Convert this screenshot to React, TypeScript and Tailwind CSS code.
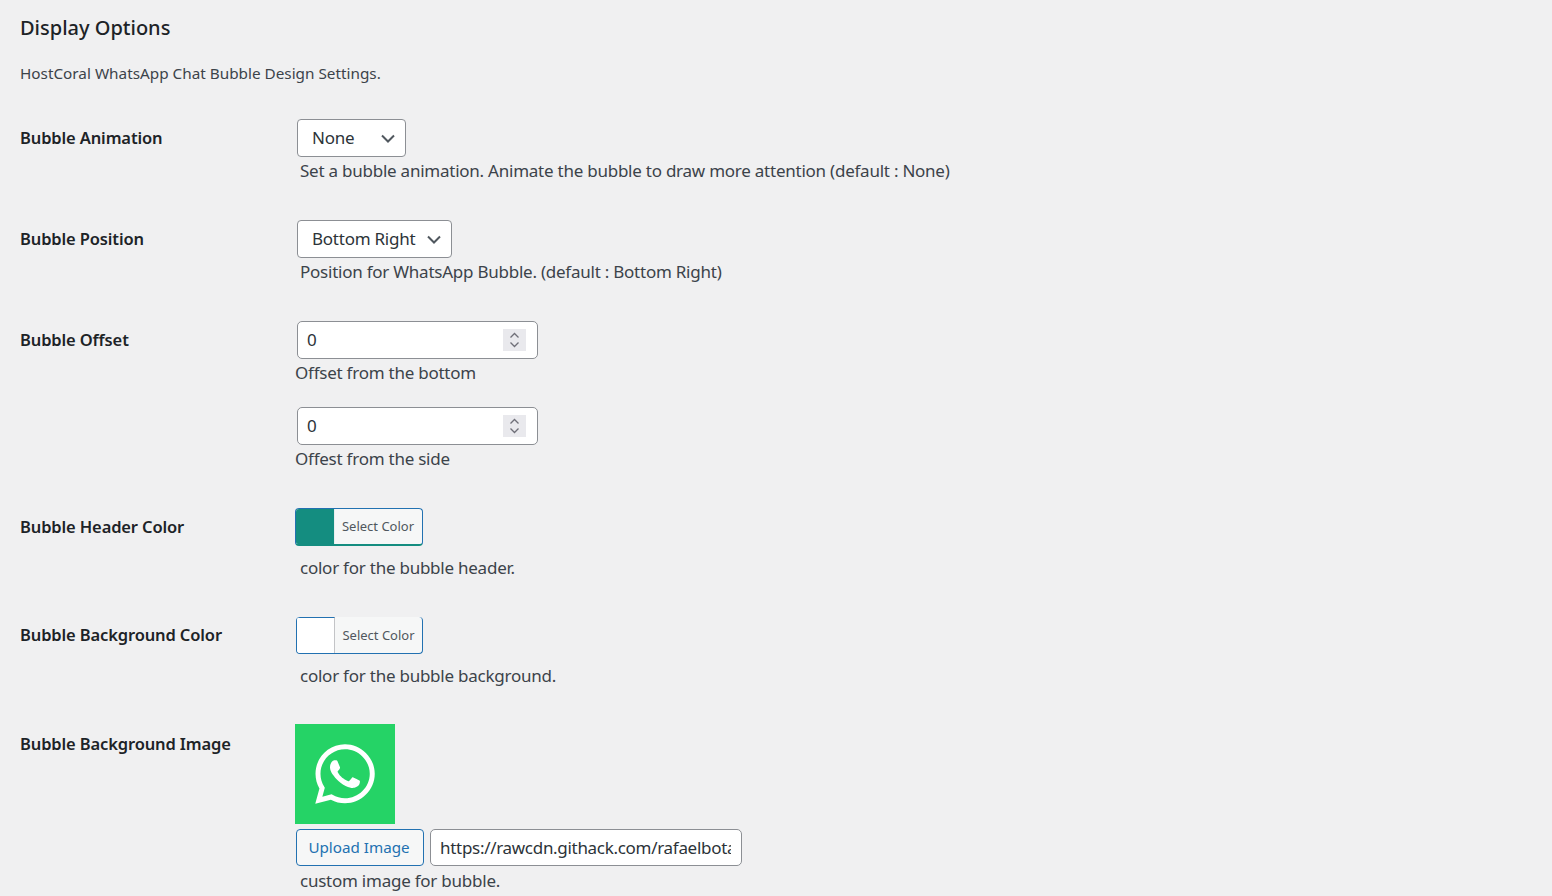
import React from "react";
import { FaWhatsapp } from "react-icons/fa";

const font = "[font-family:'Noto_Sans',sans-serif]";

function Chevron() {
  return (
    <svg width="14" height="9" viewBox="0 0 14 9" fill="none" className="shrink-0">
      <path d="M1 1.5 L7 7.5 L13 1.5" stroke="#50575e" strokeWidth="2" />
    </svg>
  );
}

function Select({ label, width }: { label: string; width: string }) {
  return (
    <div className={`${width} h-[38px] flex items-center justify-between bg-white border border-[#8c8f94] rounded-[4px] pl-[14px] pr-[10px] text-[17px] tracking-[-0.24px] text-[#2c3338]`}>
      <span>{label}</span>
      <Chevron />
    </div>
  );
}

function NumberField() {
  return (
    <div className="w-[241px] h-[38px] flex items-center justify-between bg-white border border-[#8c8f94] rounded-[5px] pl-[9px] pr-[11px] text-[17px] text-[#2c3338]">
      <span>0</span>
      <span className="w-[23px] h-[22px] bg-[#e9e9ed] flex items-center justify-center">
        <svg width="11" height="16" viewBox="0 0 11 16" fill="none">
          <path d="M1.5 5.5 L5.5 1.5 L9.5 5.5" stroke="#6f6f78" strokeWidth="1.3" />
          <path d="M1.5 10.5 L5.5 14.5 L9.5 10.5" stroke="#6f6f78" strokeWidth="1.3" />
        </svg>
      </span>
    </div>
  );
}

function HeaderColorButton() {
  return (
    <div className="w-[128px] h-[38px] flex items-stretch rounded-[4px] overflow-hidden border border-[#2271b1] border-b-2 border-b-[#148d80] bg-[#f6f7f7]">
      <span className="w-[38px] bg-[#148d80] border-r border-[#e8eeee] box-content" />
      <span className="flex-1 flex items-center justify-center pr-[1px] pt-[1px] text-[13px] text-[#50575e]">Select Color</span>
    </div>
  );
}

function BackgroundColorButton() {
  return (
    <div className="ml-px w-[127px] h-[37px] flex items-stretch rounded-[4px] overflow-hidden border border-[#2271b1] border-t-0 bg-[#f6f7f7]">
      <span className="w-[38px] bg-white border-t border-t-[#2271b1] border-r border-r-[#c3c4c7]" />
      <span className="flex-1 flex items-center justify-center pt-[2px] text-[13px] text-[#50575e]">Select Color</span>
    </div>
  );
}

function Label({ children }: { children: React.ReactNode }) {
  return <div className="w-[275px] shrink-0 text-[16.5px] tracking-[-0.13px] leading-[24px] font-semibold text-[#1d2327]">{children}</div>;
}

function Help({ children, className }: { children: React.ReactNode; className: string }) {
  return <p className={`text-[17px] tracking-[-0.24px] leading-[24px] text-[#3c434a] ${className}`}>{children}</p>;
}

export default function App() {
  return (
    <div className={`h-[896px] overflow-hidden bg-[#f0f0f1] pl-5 pt-[14px] ${font}`}>
      <h2 className="text-[20px] leading-[28px] font-medium text-[#1d2327]">Display Options</h2>
      <p className="mt-[19px] text-[15.3px] leading-[24px] text-[#3c434a]">HostCoral WhatsApp Chat Bubble Design Settings.</p>

      <section className="flex mt-[34px] h-[101px]">
        <div className="pt-[7px]"><Label>Bubble Animation</Label></div>
        <div className="pl-[2px]">
          <Select label="None" width="w-[109px]" />
          <Help className="pl-[3px] mt-[2px]">Set a bubble animation. Animate the bubble to draw more attention (default : None)</Help>
        </div>
      </section>

      <section className="flex h-[101px]">
        <div className="pt-[7px]"><Label>Bubble Position</Label></div>
        <div className="pl-[2px]">
          <Select label="Bottom Right" width="w-[155px]" />
          <Help className="pl-[3px] mt-[2px]">Position for WhatsApp Bubble. (default : Bottom Right)</Help>
        </div>
      </section>

      <section className="flex h-[187px]">
        <div className="pt-[7px]"><Label>Bubble Offset</Label></div>
        <div>
          <div className="pl-[2px]"><NumberField /></div>
          <Help className="mt-[2px]">Offset from the bottom</Help>
          <div className="pl-[2px] mt-[22px]"><NumberField /></div>
          <Help className="mt-[2px]">Offest from the side</Help>
        </div>
      </section>

      <section className="flex h-[109px]">
        <div className="pt-[7px]"><Label>Bubble Header Color</Label></div>
        <div>
          <HeaderColorButton />
          <Help className="pl-[5px] mt-[10px]">color for the bubble header.</Help>
        </div>
      </section>

      <section className="flex h-[107px]">
        <div className="pt-[6px]"><Label>Bubble Background Color</Label></div>
        <div>
          <BackgroundColorButton />
          <Help className="pl-[5px] mt-[10px]">color for the bubble background.</Help>
        </div>
      </section>

      <section className="flex">
        <div className="pt-[8px]"><Label>Bubble Background Image</Label></div>
        <div>
          <div className="w-[100px] h-[100px] bg-[#25d366] flex items-center justify-center">
            <FaWhatsapp size={68} color="#ffffff" />
          </div>
          <div className="flex mt-[5px] gap-[6px] ml-px">
            <div className="w-[128px] h-[37px] flex items-center justify-center pr-[2px] rounded-[4px] border border-[#2271b1] bg-[#f6f7f7] text-[#2271b1] text-[15.2px]">Upload Image</div>
            <input readOnly value="https://rawcdn.githack.com/rafaelbotazini/floating-whatsapp/master/whatsapp.svg" className="w-[312px] h-[37px] rounded-[5px] border border-[#8c8f94] bg-white pl-[9px] pr-[10px] text-[17px] tracking-[-0.3px] text-[#2c3338] outline-none" />
          </div>
          <Help className="pl-[5px] mt-[3px]">custom image for bubble.</Help>
        </div>
      </section>
    </div>
  );
}
